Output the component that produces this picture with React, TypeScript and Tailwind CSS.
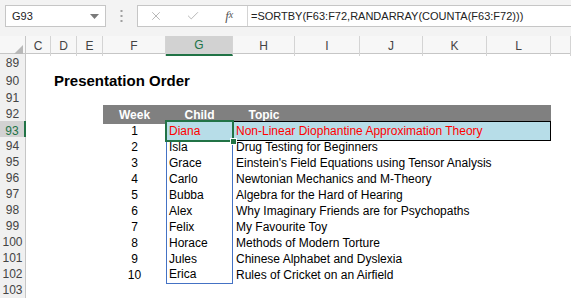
import { X, Check } from 'lucide-react';

const rows = [
  { week: 1, child: 'Diana', topic: 'Non-Linear Diophantine Approximation Theory' },
  { week: 2, child: 'Isla', topic: 'Drug Testing for Beginners' },
  { week: 3, child: 'Grace', topic: "Einstein's Field Equations using Tensor Analysis" },
  { week: 4, child: 'Carlo', topic: 'Newtonian Mechanics and M-Theory' },
  { week: 5, child: 'Bubba', topic: 'Algebra for the Hard of Hearing' },
  { week: 6, child: 'Alex', topic: 'Why Imaginary Friends are for Psychopaths' },
  { week: 7, child: 'Felix', topic: 'My Favourite Toy' },
  { week: 8, child: 'Horace', topic: 'Methods of Modern Torture' },
  { week: 9, child: 'Jules', topic: 'Chinese Alphabet and Dyslexia' },
  { week: 10, child: 'Erica', topic: 'Rules of Cricket on an Airfield' },
];

const columns = ['C', 'D', 'E', 'F', 'G', 'H', 'I', 'J', 'K', 'L', ''];

function RowHead({ n, active = false }: { n: number; active?: boolean }) {
  return (
    <div
      className={
        active
          ? 'flex items-center justify-center bg-[#d2d2d2] text-[#217346] border-r-2 border-r-[#217346] border-b border-b-[#c6c6c6]'
          : 'flex items-center justify-center bg-[#f0f0f0] text-[#444] border-r border-r-[#c6c6c6] border-b border-b-[#dadada]'
      }
    >
      {n}
    </div>
  );
}

function FormulaBar() {
  return (
    <div className="flex h-[36px] items-start gap-[4px] bg-[#f3f3f3] pl-[5px] pt-[5px]">
      <div className="flex h-[22px] w-[101px] items-center justify-between border border-[#c6c6c6] bg-white pl-[6px] pr-[6px] text-[11px] text-[#222]">
        <span>G93</span>
        <svg width="9" height="5" viewBox="0 0 9 5">
          <path d="M0 0 L9 0 L4.5 5 Z" fill="#7a7a7a" />
        </svg>
      </div>
      <div className="flex h-[22px] w-[23px] items-center justify-center">
        <svg width="3" height="12" viewBox="0 0 3 12">
          <rect x="0.5" y="0" width="2" height="2" fill="#a0a0a0" />
          <rect x="0.5" y="5" width="2" height="2" fill="#a0a0a0" />
          <rect x="0.5" y="10" width="2" height="2" fill="#a0a0a0" />
        </svg>
      </div>
      <div className="flex h-[22px] flex-1 border border-r-0 border-[#c6c6c6] bg-white">
        <div className="flex w-[110px] items-center border-r border-[#d4d4d4]">
          <div className="flex w-[36px] justify-center">
            <X size={14} strokeWidth={1.4} color="#a8a8a8" />
          </div>
          <div className="flex w-[38px] justify-center">
            <Check size={14} strokeWidth={1.4} color="#a8a8a8" />
          </div>
          <div className="flex w-[36px] justify-center font-['Liberation_Serif',serif] text-[13px] italic text-[#555]">
            f<span className="text-[10px] leading-[18px]">x</span>
          </div>
        </div>
        <div className="flex items-center pl-[3px] text-[11px] text-[#222]">
          =SORTBY(F63:F72,RANDARRAY(COUNTA(F63:F72)))
        </div>
      </div>
    </div>
  );
}

export default function App() {
  return (
    <div className="h-[298px] w-[571px] overflow-hidden bg-white font-['Liberation_Sans',Arial,sans-serif] text-[12px] text-black">
      <FormulaBar />

      <div className="grid h-[18px] grid-cols-[26px_25px_26px_26px_63px_67px_62px_65px_63px_64px_64px_1fr] border-b border-[#c6c6c6] bg-[#f7f7f7] text-[12px] text-[#444]">
        <div className="flex items-end justify-end border-r border-[#c6c6c6] pb-[2px] pr-[2px]">
          <svg width="9" height="9" viewBox="0 0 9 9">
            <path d="M9 0 L9 9 L0 9 Z" fill="#b8b8b8" />
          </svg>
        </div>
        {columns.map((c) =>
          c === 'G' ? (
            <div key={c} className="flex items-center justify-center border-b-2 border-r border-b-[#217346] border-r-[#d4d4d4] bg-[#d2d2d2] text-[#217346]">
              {c}
            </div>
          ) : (
            <div key={c || 'm'} className="flex items-center justify-center border-r border-[#d4d4d4]">
              {c}
            </div>
          )
        )}
      </div>

      <div className="grid h-[16px] grid-cols-[26px_25px_26px_26px_63px_67px_62px_65px_63px_64px_64px_1fr]">
        <RowHead n={89} />
      </div>

      <div className="grid h-[19px] grid-cols-[26px_25px_26px_26px_63px_67px_62px_65px_63px_64px_64px_1fr]">
        <RowHead n={90} />
        <div />
        <div className="col-span-6 flex items-center whitespace-nowrap pl-[3px] text-[15px] font-bold">
          Presentation Order
        </div>
      </div>

      <div className="grid h-[16px] grid-cols-[26px_25px_26px_26px_63px_67px_62px_65px_63px_64px_64px_1fr]">
        <RowHead n={91} />
      </div>

      <div className="grid h-[16px] grid-cols-[26px_25px_26px_26px_63px_67px_62px_65px_63px_64px_64px_1fr]">
        <RowHead n={92} />
        <div className="col-span-3" />
        <div className="flex items-center justify-center bg-[#808080] font-bold text-white">Week</div>
        <div className="flex items-center justify-center bg-[#808080] font-bold text-white">Child</div>
        <div className="flex items-center justify-center bg-[#808080] font-bold text-white">Topic</div>
        <div className="col-span-4 bg-[#808080]" />
      </div>

      {rows.map((r, i) => {
        const first = i === 0;
        const last = i === rows.length - 1;
        return (
          <div
            key={r.week}
            className="grid h-[16px] grid-cols-[26px_25px_26px_26px_63px_67px_62px_65px_63px_64px_64px_1fr]"
          >
            <RowHead n={93 + i} active={first} />
            <div className="col-span-3" />
            <div className="flex items-center justify-center">{r.week}</div>
            <div
              className={
                first
                  ? 'relative flex items-center bg-[#b7dde8] pl-[3px] text-[#ff0000]'
                  : last
                    ? 'flex items-center border-x border-b border-[#4472c4] pl-[2px]'
                    : 'flex items-center border-x border-[#4472c4] pl-[2px]'
              }
            >
              {r.child}
              {first && (
                <>
                  <div className="absolute inset-[-1px] border-2 border-[#217346]" />
                  <div className="absolute -bottom-[4px] -right-[4px] h-[7px] w-[7px] border border-white bg-[#217346]" />
                </>
              )}
            </div>
            <div
              className={
                first
                  ? 'col-span-5 flex items-center whitespace-nowrap border border-black bg-[#b7dde8] pl-[2px] text-[#ff0000]'
                  : 'col-span-5 flex items-center whitespace-nowrap pl-[3px]'
              }
            >
              {r.topic}
            </div>
          </div>
        );
      })}

      <div className="grid h-[16px] grid-cols-[26px_25px_26px_26px_63px_67px_62px_65px_63px_64px_64px_1fr]">
        <RowHead n={103} />
      </div>
    </div>
  );
}
